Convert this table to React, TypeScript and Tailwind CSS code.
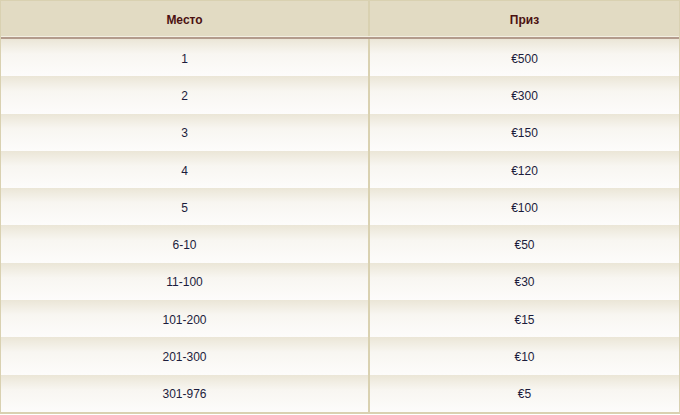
import React from 'react';

const rows = [
  { place: '1', prize: '€500' },
  { place: '2', prize: '€300' },
  { place: '3', prize: '€150' },
  { place: '4', prize: '€120' },
  { place: '5', prize: '€100' },
  { place: '6-10', prize: '€50' },
  { place: '11-100', prize: '€30' },
  { place: '101-200', prize: '€15' },
  { place: '201-300', prize: '€10' },
  { place: '301-976', prize: '€5' },
];

export default function App() {
  return (
    <div className="w-[680px] h-[415px] bg-white font-['Liberation_Sans',Arial,sans-serif] text-[12px]">
      <div className="flex flex-col border border-[#d9d1b1] border-b-2">
        {/* header */}
        <div className="flex h-[36px] bg-[#e2dbc3] border-b border-[#f3efe2]">
          <div className="w-[369px] flex items-center justify-center pt-[2px] font-bold text-[#4b1111] border-r-2 border-[#d9d1b1]">
            Место
          </div>
          <div className="flex-1 flex items-center justify-center pt-[2px] font-bold text-[#4b1111]">Приз</div>
        </div>
        <div className="h-[2px] bg-[#b39b8c]" />
        {/* rows */}
        {rows.map((row, i) => (
          <div
            key={i}
            className="flex h-[37.3px] bg-gradient-to-b from-[#ebe6d7] via-[#f8f6f1] via-40% to-[#fdfcfb] text-[#1c1c3c]"
          >
            <div className="w-[369px] flex items-center justify-center pt-[2px] border-r-2 border-[#d9d1b1]">
              {row.place}
            </div>
            <div className="flex-1 flex items-center justify-center pt-[2px]">{row.prize}</div>
          </div>
        ))}
      </div>
    </div>
  );
}
